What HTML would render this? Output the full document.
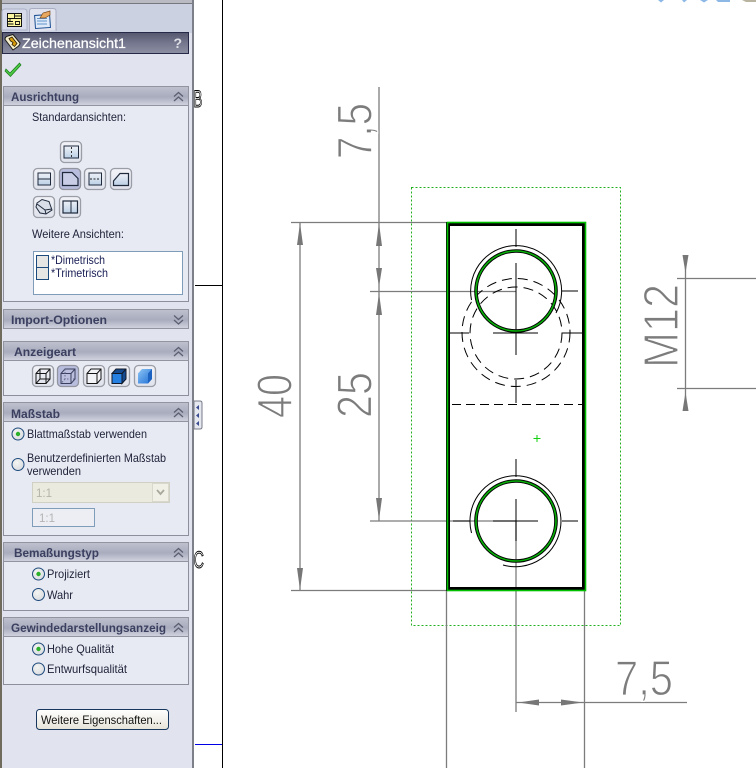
<!DOCTYPE html>
<html lang="de"><head><meta charset="utf-8"><title>Zeichenansicht1</title>
<style>
html,body{margin:0;padding:0;background:#fff;width:756px;height:768px;overflow:hidden}
svg{display:block;position:absolute;left:0;top:0}
text{font-family:"Liberation Sans",sans-serif}
.t{font-size:12px;fill:#20243a}
.h{font-size:12px;font-weight:bold;fill:#3c4060}
.d{fill:#7c7c7c;stroke:#fff;stroke-width:1.2px;font-size:49px}
.g{stroke:#7c7c7c;stroke-width:1.3;fill:none}
.a{fill:#777}
.k{stroke:#000;stroke-width:1;fill:none}
</style></head><body>
<svg width="756" height="768" viewBox="0 0 756 768" xmlns="http://www.w3.org/2000/svg">
<defs>
<linearGradient id="hd" x1="0" y1="0" x2="0" y2="1"><stop offset="0" stop-color="#55576f"/><stop offset=".5" stop-color="#75778e"/><stop offset="1" stop-color="#8c8ea2"/></linearGradient>
<linearGradient id="sec" x1="0" y1="0" x2="0" y2="1"><stop offset="0" stop-color="#bfc1cf"/><stop offset=".55" stop-color="#a9acbd"/><stop offset="1" stop-color="#d2d4e0"/></linearGradient>
<linearGradient id="btn" x1="0" y1="0" x2="0" y2="1"><stop offset="0" stop-color="#f2f3f8"/><stop offset="1" stop-color="#dfe2ec"/></linearGradient>
<linearGradient id="face" x1="0" y1="0" x2="0" y2="1"><stop offset="0" stop-color="#eef1f7"/><stop offset="1" stop-color="#bcd0e6"/></linearGradient>
<linearGradient id="blue" x1="0" y1="0" x2="1" y2="1"><stop offset="0" stop-color="#8cc4f4"/><stop offset="1" stop-color="#1f6fd6"/></linearGradient>
<linearGradient id="push" x1="0" y1="0" x2="0" y2="1"><stop offset="0" stop-color="#fff"/><stop offset="1" stop-color="#e6e4d8"/></linearGradient>
<radialGradient id="rad" cx=".4" cy=".35" r=".8"><stop offset="0" stop-color="#f4f5f2"/><stop offset="1" stop-color="#d3d6dc"/></radialGradient>
<g id="chevU"><path d="M-4.500 -.5L0 -4.500L4.500 -.5M-4.500 4L0 0L4.500 4" fill="none" stroke="#5c5f72" stroke-width="1.300"/></g>
<g id="chevD"><path d="M-4.500 -4L0 0L4.500 -4M-4.500 .5L0 4.500L4.500 .5" fill="none" stroke="#5c5f72" stroke-width="1.300"/></g>
<g id="b"><rect x=".5" y=".5" width="21" height="21" rx="4" fill="url(#btn)" stroke="#9a9ca6" stroke-width="1.300"/></g>
<g id="bOn"><rect x=".5" y=".5" width="21" height="21" rx="4" fill="#b9bddd" stroke="#92949f" stroke-width="1.300"/></g>
</defs>

<!-- panel -->
<rect x="0" y="0" width="194" height="768" fill="#e1e4ee"/>
<rect x="0" y="0" width="194" height="33" fill="#ccd1e2"/>
<rect x="0" y="0" width="2" height="768" fill="#6f6c5e"/>
<rect x="192" y="0" width="2" height="768" fill="#7d8088"/>
<rect x="2" y="0" width="190" height="3" fill="#b9bac2"/>
<rect x="2" y="3" width="190" height="1" fill="#77787f"/>

<!-- tabs -->
<path d="M2 30V12Q2 9 5 9H24Q27 9 27 12V30Z" fill="#d6daea" stroke="#aab0c4"/>
<path d="M29.500 32V11Q29.500 8.500 32 8.500H53Q56 8.500 56 11V30H57" fill="#e1e4ee" stroke="#a9aec2"/>
<rect x="7.500" y="13.500" width="14" height="13" fill="#fdf6a0" stroke="#111"/>
<path d="M14.500 13.500v5M14.500 16h7M7.500 18.500h14M10 18.500v3M8 21.500h5M15.500 21.500h4v3h-4zM7.500 24h6" fill="none" stroke="#111" stroke-width=".9"/>
<rect x="35" y="15" width="15" height="13" fill="#dfeaf8" stroke="#1b4f92" transform="rotate(-4 42 21)"/>
<path d="M37 18.500h10M37 21h10M37 24h10" stroke="#5e93cc"/>
<path d="M40 18L43 13L50 11L50 15L45 18Z" fill="#e8a860" stroke="#7a4a1c" stroke-width=".7"/>

<!-- title bar -->
<rect x="2.500" y="32.500" width="186" height="21" fill="url(#hd)" stroke="#262a48"/>
<path d="M5 39.500Q5 36.500 8 36L13 34.500L20 43Q20 45 18 46.500L13 50Z" fill="#f4eecb" stroke="#1b1b1b"/>
<path d="M9 38.500L12 37L17 43.500L14.500 46.500L12 44.500L13 42.500L10.500 41Z" fill="#d49a0c" stroke="#2a1c00" stroke-width=".8"/>
<text x="22" y="48" font-size="14" fill="#fff" stroke="#fff" stroke-width=".25" textLength="104" lengthAdjust="spacingAndGlyphs">Zeichenansicht1</text>
<text x="173.500" y="48" font-size="14" font-weight="bold" fill="#dfe0e6">?</text>

<!-- check -->
<path d="M6 69L10 73L19.500 63L21 65L10.500 76.500L5 71Z" fill="#4cc644" stroke="#187a18" stroke-width=".7"/>

<!-- Ausrichtung -->
<rect x="3.500" y="86.500" width="185" height="215" fill="#e8eaf3" stroke="#8d909c"/>
<rect x="3.500" y="86.500" width="185" height="19" fill="url(#sec)" stroke="#92949f"/>
<text class="h" x="11" y="101" textLength="68" lengthAdjust="spacingAndGlyphs">Ausrichtung</text>
<use href="#chevU" x="178.500" y="97"/>
<text class="t" x="32" y="121" textLength="94" lengthAdjust="spacingAndGlyphs">Standardansichten:</text>

<use href="#b" x="60" y="141"/>
<rect x="64" y="146" width="14.500" height="12" fill="url(#face)" stroke="#1f2a3c"/><path d="M71.500 147v11" stroke="#333" stroke-dasharray="2 2"/>
<use href="#b" x="33" y="168"/>
<rect x="38" y="173" width="12.500" height="12" fill="url(#face)" stroke="#1f2a3c"/><path d="M38 179h12.500" stroke="#1f2a3c"/>
<use href="#bOn" x="59" y="168"/>
<path d="M62.500 185.500V172.500H72L78 178.500V185.500Z" fill="#c9cde6" stroke="#1f2a3c" stroke-width="1.200"/>
<use href="#b" x="84" y="168"/>
<rect x="89" y="173" width="12.500" height="12" fill="url(#face)" stroke="#1f2a3c"/><path d="M90 179h10" stroke="#222" stroke-dasharray="2 1.500"/>
<use href="#b" x="110" y="168"/>
<path d="M113.500 185.500V181L120 173.500H128.500V185.500Z" fill="url(#face)" stroke="#1f2a3c" stroke-width="1.200"/>
<use href="#b" x="33" y="196"/>
<path d="M37 203L42 199.500L49 201.500L52 210L46 214L40 213L36 207Z" fill="#d9dee8" stroke="#1f2a3c"/><path d="M37 204L45 210L52 209M45 210L46 214" stroke="#1f2a3c" fill="none"/>
<use href="#b" x="59" y="196"/>
<rect x="63" y="201" width="14.500" height="12" fill="url(#face)" stroke="#1f2a3c" stroke-width="1.200"/><path d="M71 201v12" stroke="#1f2a3c"/>

<text class="t" x="32" y="238" textLength="92" lengthAdjust="spacingAndGlyphs">Weitere Ansichten:</text>
<rect x="33.500" y="251.500" width="149" height="43" fill="#fff" stroke="#7f9db9"/>
<rect x="36.500" y="255.500" width="12" height="12" fill="#e6e6e4" stroke="#1d4a7c"/>
<rect x="36.500" y="267.500" width="12" height="12" fill="#e6e6e4" stroke="#1d4a7c"/>
<text class="t" x="51" y="264" textLength="54" lengthAdjust="spacingAndGlyphs" style="fill:#1a1f55">*Dimetrisch</text>
<text class="t" x="51" y="277" textLength="57" lengthAdjust="spacingAndGlyphs" style="fill:#1a1f55">*Trimetrisch</text>

<!-- Import -->
<rect x="3.500" y="309.500" width="185" height="19" fill="url(#sec)" stroke="#92949f"/>
<text class="h" x="11" y="324" textLength="96" lengthAdjust="spacingAndGlyphs">Import-Optionen</text>
<use href="#chevD" x="178.500" y="319.500"/>

<!-- Anzeigeart -->
<rect x="3.500" y="341.500" width="185" height="54" fill="#e8eaf3" stroke="#8d909c"/>
<rect x="3.500" y="341.500" width="185" height="19" fill="url(#sec)" stroke="#92949f"/>
<text class="h" x="14" y="356" textLength="62" lengthAdjust="spacingAndGlyphs">Anzeigeart</text>
<use href="#chevU" x="178.500" y="352"/>
<use href="#b" x="32" y="365"/>
<path d="M36 373.500H46V383.500H36ZM36 373.500L40 369H50V379L46 383.500M40 369V379H50M40 379L36 383.500M46 373.500L50 369" fill="none" stroke="#151515"/>
<use href="#bOn" x="57" y="365"/>
<path d="M61 373.500H71V383.500H61ZM61 373.500L65 369H75V379L71 383.500M71 373.500L75 369" fill="#bcc0de" stroke="#3c4060"/>
<path d="M65 369V379H75M65 379L61 383.500" stroke="#6a6e90" stroke-dasharray="1.500 1.500" fill="none"/>
<use href="#b" x="83" y="365"/>
<path d="M87 373.500H97V383.500H87ZM87 373.500L91 369H101V379L97 383.500M97 373.500L101 369" fill="#f3f4f8" stroke="#151515"/>
<use href="#b" x="108" y="365"/>
<path d="M112 373.500H122V383.500H112Z" fill="#2580e2" stroke="#101828"/><path d="M112 373.500L116 369H126V379L122 383.500V373.500Z" fill="#144a90" stroke="#101828"/><path d="M122 373.500L126 369" stroke="#101828"/>
<use href="#b" x="134" y="365"/>
<path d="M138 373.500L142 369H152V379L148 383.500H138Z" fill="url(#blue)"/><path d="M148 373.500L152 369V379L148 383.500Z" fill="#1c62c0"/>

<!-- Massstab -->
<rect x="3.500" y="402.500" width="185" height="133" fill="#e8eaf3" stroke="#8d909c"/>
<rect x="3.500" y="402.500" width="185" height="19" fill="url(#sec)" stroke="#92949f"/>
<text class="h" x="11" y="418" textLength="49" lengthAdjust="spacingAndGlyphs">Maßstab</text>
<use href="#chevU" x="178.500" y="413"/>
<circle cx="18" cy="434" r="6" fill="url(#rad)" stroke="#1d4a7c"/><circle cx="18" cy="434" r="2.200" fill="#2bb02b"/>
<text class="t" x="27" y="438" textLength="120" lengthAdjust="spacingAndGlyphs">Blattmaßstab verwenden</text>
<circle cx="18" cy="464.500" r="6" fill="url(#rad)" stroke="#1d4a7c"/>
<text class="t" x="27" y="462" textLength="139" lengthAdjust="spacingAndGlyphs">Benutzerdefinierten Maßstab</text>
<text class="t" x="27" y="475" textLength="54" lengthAdjust="spacingAndGlyphs">verwenden</text>
<rect x="32.500" y="482.500" width="137" height="20" fill="#eaeadf" stroke="#d0d0c4"/>
<rect x="152.500" y="483.500" width="16" height="18" fill="#f0f0e6" stroke="#d8d8cc"/>
<path d="M157 490L160.500 494L164 490" fill="none" stroke="#a8a89c" stroke-width="1.800"/>
<text x="36" y="497" font-size="11.500" fill="#b4b4a8">1:1</text>
<rect x="32.500" y="508.500" width="62" height="18" fill="#eceef3" stroke="#7f9db9"/>
<text x="39" y="522" font-size="11.500" fill="#b4b4b4">1:1</text>

<!-- Bemassungstyp -->
<rect x="3.500" y="542.500" width="185" height="68" fill="#e8eaf3" stroke="#8d909c"/>
<rect x="3.500" y="542.500" width="185" height="19" fill="url(#sec)" stroke="#92949f"/>
<text class="h" x="14" y="557" textLength="85" lengthAdjust="spacingAndGlyphs">Bemaßungstyp</text>
<use href="#chevU" x="178.500" y="553"/>
<circle cx="38.500" cy="574" r="6" fill="url(#rad)" stroke="#1d4a7c"/><circle cx="38.500" cy="574" r="2.200" fill="#2bb02b"/>
<text class="t" x="47" y="578" textLength="43" lengthAdjust="spacingAndGlyphs">Projiziert</text>
<circle cx="38.500" cy="594.500" r="6" fill="url(#rad)" stroke="#1d4a7c"/>
<text class="t" x="47" y="599" textLength="26" lengthAdjust="spacingAndGlyphs">Wahr</text>

<!-- Gewinde -->
<rect x="3.500" y="617.500" width="185" height="67" fill="#e8eaf3" stroke="#8d909c"/>
<rect x="3.500" y="617.500" width="185" height="19" fill="url(#sec)" stroke="#92949f"/>
<text class="h" x="11" y="632" textLength="155" lengthAdjust="spacingAndGlyphs">Gewindedarstellungsanzeig</text>
<use href="#chevU" x="178.500" y="628"/>
<circle cx="38.500" cy="649" r="6" fill="url(#rad)" stroke="#1d4a7c"/><circle cx="38.500" cy="649" r="2.200" fill="#2bb02b"/>
<text class="t" x="47" y="653" textLength="67" lengthAdjust="spacingAndGlyphs">Hohe Qualität</text>
<circle cx="38.500" cy="669" r="6" fill="url(#rad)" stroke="#1d4a7c"/>
<text class="t" x="47" y="673" textLength="80" lengthAdjust="spacingAndGlyphs">Entwurfsqualität</text>

<!-- push button -->
<rect x="36.500" y="709.500" width="132" height="20" rx="3" fill="url(#push)" stroke="#17375e"/>
<text class="t" x="41" y="724" textLength="121" lengthAdjust="spacingAndGlyphs" style="fill:#111">Weitere Eigenschaften...</text>

<!-- splitter handle -->
<path d="M194 401H200Q202 401 202 403V427Q202 429 200 429H194Z" fill="#e6e8f0" stroke="#777a88"/>
<path d="M199 405L196 407.500L199 410ZM199 413L196 415.500L199 418ZM199 421L196 423.500L199 426Z" fill="#3a4a90"/>

<!-- sheet -->
<path d="M222.500 0V768" stroke="#000"/>
<path d="M195 285.500H222" stroke="#000"/>
<path d="M195 744.500H222" stroke="#0000e6"/>
<text x="0" y="0" font-size="24" fill="none" stroke="#000" stroke-width="1" transform="translate(193.500 107) scale(.55 1)">B</text>
<text x="0" y="0" font-size="24" fill="none" stroke="#000" stroke-width="1" transform="translate(193.500 568) scale(.6 1)">C</text>

<!-- top blue bits -->
<path d="M658 0L661 2.500L664 0ZM682 0L684 2.500L687 0ZM700 0L704 2.500L708 0ZM716 0H730V2H718Z" fill="#8db8e6"/>
<path d="M742 0H756V2H746Z" fill="#b8b4a0"/>

<!-- view boundary -->
<rect x="411.500" y="187.500" width="209" height="438" fill="none" stroke="#22b022" stroke-dasharray="2 2"/>

<!-- dim / extension lines -->
<path class="g" d="M291 222.500H447M370 291.500H516M370 521H516M291 590.500H447M300 222V590M379 87V521M446.500 590V768M516 521V712M584.500 590V768M516 702.500H687M677 278.500H756M677 388.500H756M685.500 255V411"/>

<!-- arrowheads -->
<path class="a" d="M300 223L303 245H297ZM300 590L303 568H297ZM379 223L382 246H376ZM379 287L376 268H382ZM379 293L382 315H376ZM379 520L382 498H376ZM518 702.500L539 699.500V705.500ZM583 702.500L561 699.500V705.500ZM685.500 273L682.500 255H688.500ZM685.500 392L688.500 411H682.500Z"/>

<!-- part geometry -->
<g class="k">
<path d="M516 229V247M516 263V355M562 291H578M493 333H538M448 333H469M562 333H583M516 380V403M516 459V477M516 499V541M453 521H470M493 521H538M562 521H578"/>
<path d="M452 404.500H585" stroke-dasharray="9 5"/>
<circle cx="516" cy="332.500" r="54" stroke-dasharray="10 6"/>
<circle cx="516" cy="333" r="46" stroke-dasharray="10 6"/>
<path d="M471.500 300A45.500 45.500 0 1 1 556 313"/>
<path d="M471.500 533A45.500 45.500 0 1 1 503 565"/>
</g>
<rect x="448" y="224" width="136" height="365" fill="none" stroke="#000" stroke-width="4"/>
<rect x="447.500" y="222.500" width="138" height="368" fill="none" stroke="#00c000" stroke-width="1.600"/>
<circle cx="516" cy="291" r="40" fill="none" stroke="#000" stroke-width="3.600"/>
<circle cx="516" cy="291" r="40" fill="none" stroke="#08b008" stroke-width="1.600"/>
<circle cx="516" cy="521" r="40" fill="none" stroke="#000" stroke-width="3.600"/>
<circle cx="516" cy="521" r="40" fill="none" stroke="#08b008" stroke-width="1.600"/>
<path d="M537 435V442M533.500 438.500H540.500" stroke="#10d010"/>

<!-- dimension text -->
<text class="d" transform="translate(371.500 159) rotate(-90)" textLength="56" lengthAdjust="spacingAndGlyphs">7,5</text>
<text class="d" transform="translate(371.500 418) rotate(-90)" textLength="46" lengthAdjust="spacingAndGlyphs">25</text>
<text class="d" transform="translate(291.500 418) rotate(-90)" textLength="44" lengthAdjust="spacingAndGlyphs">40</text>
<text class="d" transform="translate(678 368) rotate(-90)" textLength="84" lengthAdjust="spacingAndGlyphs">M12</text>
<text class="d" x="615" y="695" textLength="58" lengthAdjust="spacingAndGlyphs">7,5</text>
</svg>
</body></html>
